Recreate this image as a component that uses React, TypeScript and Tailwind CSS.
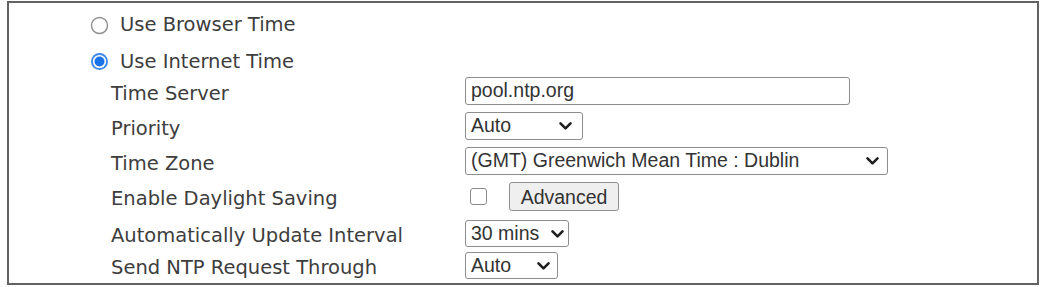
import type { ReactNode } from 'react'

const labelFont = { fontFamily: '"DejaVu Sans", Verdana, sans-serif' }
const fieldFont = { fontFamily: '"Liberation Sans", Arial, sans-serif' }

function Radio({ checked }: { checked?: boolean }) {
  return (
    <svg width="19" height="19" viewBox="0 0 19 19" className="shrink-0">
      {checked ? (
        <>
          <circle cx="9.5" cy="9.5" r="8.5" fill="#1a73e8" opacity="0.85" />
          <circle cx="9.5" cy="9.5" r="6.6" fill="#ffffff" />
          <circle cx="9.5" cy="9.5" r="5" fill="#1a73e8" />
        </>
      ) : (
        <circle cx="9.5" cy="9.5" r="8" fill="#ffffff" stroke="#8e8e8e" strokeWidth="1.4" />
      )}
    </svg>
  )
}

function Chevron() {
  return (
    <svg width="13" height="9" viewBox="0 0 13 9">
      <path d="M1.5 1.8 L6.5 6.8 L11.5 1.8" fill="none" stroke="#1f1f1f" strokeWidth="2.6" strokeLinecap="round" strokeLinejoin="round" />
    </svg>
  )
}

function Select({ value, width, chevronRight }: { value: string; width: string; chevronRight: string }) {
  return (
    <div
      className={`relative h-full ${width} border border-[#8d8d8d] rounded-[3px] bg-white flex items-center pl-[5px] text-[19.5px] text-[#333]`}
      style={fieldFont}
    >
      <span className="leading-none">{value}</span>
      <span className={`absolute top-1/2 -translate-y-1/2 ${chevronRight} flex`}>
        <Chevron />
      </span>
    </div>
  )
}

function Row({ label, height, className = '', children }: { label: string; height: string; className?: string; children: ReactNode }) {
  return (
    <div className={`flex ${height} ${className}`}>
      <div className="w-[354px] shrink-0 flex items-center pt-[5px] text-[19.5px] text-[#3d3d3d]" style={labelFont}>
        {label}
      </div>
      <div className="flex items-center h-full">{children}</div>
    </div>
  )
}

export default function App() {
  return (
    <div className="w-[1043px] h-[287px] bg-white pt-px pl-[7px]">
      <div className="w-[1032px] h-[284px] border-2 border-[#626262] pl-[81px]">
        {/* Time source */}
        <div className="flex items-center gap-[11px] h-[40px] pt-[4px] text-[19.5px] text-[#3d3d3d]" style={labelFont}>
          <Radio />
          <span>Use Browser Time</span>
        </div>
        <div className="flex items-center gap-[11px] h-[34px] pt-[3px] text-[19.5px] text-[#3d3d3d]" style={labelFont}>
          <Radio checked />
          <span>Use Internet Time</span>
        </div>

        {/* Internet time settings */}
        <div className="pl-[21px]">
          <Row label="Time Server" height="h-[28px]" className="mb-[7px]">
            <div
              className="w-[385px] h-full border border-[#8d8d8d] rounded-[3px] flex items-center pl-[5px] text-[19.5px] text-[#333]"
              style={fieldFont}
            >
              pool.ntp.org
            </div>
          </Row>
          <Row label="Priority" height="h-[28px]" className="mb-[7px]">
            <Select value="Auto" width="w-[118px]" chevronRight="right-[10px]" />
          </Row>
          <Row label="Time Zone" height="h-[28px]" className="mb-[7px]">
            <Select value="(GMT) Greenwich Mean Time : Dublin" width="w-[423px]" chevronRight="right-[8px]" />
          </Row>
          <Row label="Enable Daylight Saving" height="h-[29px]" className="mb-[9px]">
            <div className="ml-[5px] w-[17px] h-[17px] border-[1.5px] border-[#8a8a8a] rounded-[3px] bg-white" />
            <button
              className="ml-[22px] w-[110px] h-[29px] bg-[#efefef] border border-[#8f8f8f] rounded-[3px] text-[19.5px] text-[#333]"
              style={fieldFont}
            >
              Advanced
            </button>
          </Row>
          <Row label="Automatically Update Interval" height="h-[27px]" className="mb-[5px]">
            <Select value="30 mins" width="w-[104px]" chevronRight="right-[4px]" />
          </Row>
          <Row label="Send NTP Request Through" height="h-[27px]">
            <Select value="Auto" width="w-[93px]" chevronRight="right-[7px]" />
          </Row>
        </div>
      </div>
    </div>
  )
}
